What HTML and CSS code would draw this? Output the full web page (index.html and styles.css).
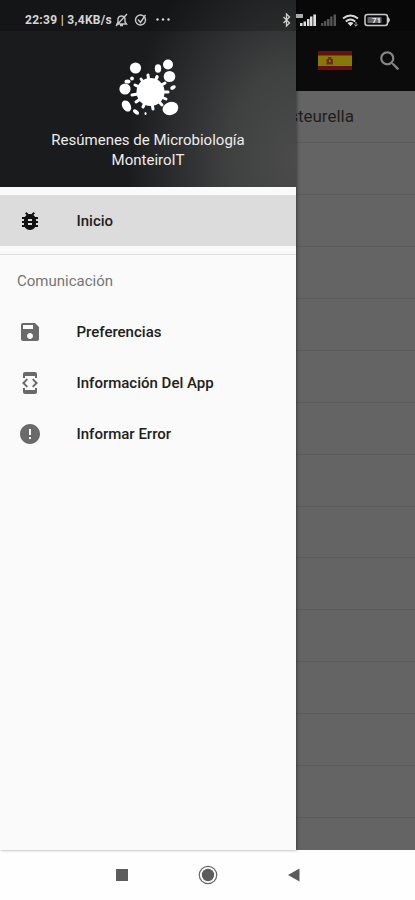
FILE: index.html
```html
<!DOCTYPE html>
<html lang="es">
<head>
<meta charset="utf-8">
<title>Resúmenes de Microbiología</title>
<link rel="stylesheet" href="styles.css">
</head>
<body>
<div class="phone">
  <div class="status">
    <span class="clock">22:39 | 3,4KB/s</span>
    <svg class="status-left" width="60" height="16" viewBox="0 0 60 16" fill="none" stroke="#c8c8c8" stroke-width="1.4">
      <path d="M3 12h9.500l-1.500-2V6.500a3.700 3.700 0 0 0-7 0V10zM6 13.500h3M2 14 13 2"/>
      <circle cx="26.500" cy="8" r="5"/><path d="M24 7.500l2.500 3 5-7.500"/>
      <g fill="#d8d8d8" stroke="none"><circle cx="43.500" cy="7.500" r="1.200"/><circle cx="49" cy="7.500" r="1.200"/><circle cx="54.500" cy="7.500" r="1.200"/></g>
    </svg>
    <svg class="status-right" width="112" height="16" viewBox="0 0 112 16">
      <path d="M2.500 5l6 6L5.500 14V2l3 3-6 6" fill="none" stroke="#d0d0d0" stroke-width="1.300"/>
      <path d="M15 2h7v4h-7z" fill="#aaa"/>
      <path d="M19 14v-3h2.500v3zM22.500 14V9.500H25V14zM26 14V7h2.500v7zM29 14V4.500h2.500V14zM32.300 14V2.500H35V14z" fill="#dedede"/>
      <path d="M40 14v-3h2.300v3zM43 14V9h2.300v5zM46 14V7h2.500v7zM49.200 14V4.500h2.300V14zM52.500 14V2.500H55V14z" fill="#555"/>
      <g fill="none" stroke="#d8d8d8" stroke-width="2"><path d="M62 6.500q7.500-6 15 0M64.800 9.500q4.700-4 9.400 0"/></g>
      <path d="M66.500 11q3-2 6 0l-3 3.300z" fill="#ddd"/><path d="M75 10v4M73.300 12.500l1.700 1.700 1.700-1.700" stroke="#aaa" fill="none"/>
      <rect x="84" y="2.500" width="22.500" height="11" rx="2.500" fill="none" stroke="#ccc" stroke-width="1.500"/>
      <rect x="86.500" y="5" width="14" height="6" fill="#666"/><path d="M107 5q4 3 0 6z" fill="#ccc"/>
      <text x="95.500" y="11.300" class="battery-text">71</text>
    </svg>
  </div>
  <div class="main">
    <nav class="drawer">
      <header class="drawer-head">
        <svg width="64" height="64" viewBox="118 57 64 64" fill="#fff">
          <circle cx="150.500" cy="92" r="14"/>
          <g stroke="#fff" stroke-width="3" stroke-linecap="round"><path d="M150 92L148 75M150 92L157 77M150 92L141 79M150 92L135 85M150 92L132 95M150 92L136 102M150 92L143 107M150 92L153 109M150 92L162 105M150 92L166 99M150 92L168 92M150 92L165 83"/></g>
          <circle cx="135.500" cy="68" r="5.600"/><circle cx="125" cy="89" r="5.600"/><circle cx="168" cy="64.500" r="5"/>
          <ellipse cx="158" cy="68.500" rx="3.200" ry="4.200"/><ellipse cx="169.500" cy="76.500" rx="5.800" ry="5.500"/>
          <ellipse cx="170.500" cy="108.500" rx="8" ry="6.500" transform="rotate(-20 170.500 108.500)"/>
          <ellipse cx="126.500" cy="106" rx="4.200" ry="6" transform="rotate(-30 126.500 106)"/>
          <ellipse cx="136" cy="112" rx="1.900" ry="3.500" transform="rotate(-50 136 112)"/>
          <ellipse cx="145.500" cy="113.500" rx="1" ry="1.500"/><ellipse cx="157" cy="77" rx="1.500" ry="2"/>
          <ellipse cx="173" cy="87.500" rx="3" ry="1.900" transform="rotate(-30 173 87.500)"/>
          <ellipse cx="127.500" cy="81.500" rx="3" ry="2"/><circle cx="132" cy="78.500" r="1.900"/>
        </svg>
        <div class="title">Resúmenes de Microbiología<br>MonteiroIT</div>
      </header>
      <a class="item active">
        <svg class="icon" viewBox="0 0 24 24"><path d="M20 8h-2.810c-.45-.78-1.070-1.450-1.820-1.960L17 4.410 15.590 3l-2.170 2.170C12.960 5.060 12.490 5 12 5s-.96.060-1.410.17L8.410 3 7 4.410l1.620 1.630C7.880 6.550 7.260 7.220 6.810 8H4v2h2.090c-.05.33-.09.66-.09 1v1H4v2h2v1c0 .34.040.67.090 1H4v2h2.810c1.040 1.790 2.970 3 5.190 3s4.150-1.210 5.190-3H20v-2h-2.090c.05-.33.090-.66.090-1v-1h2v-2h-2v-1c0-.34-.04-.67-.09-1H20V8zm-6 8h-4v-2h4v2zm0-4h-4v-2h4v2z"/></svg>
        <span>Inicio</span>
      </a>
      <section class="group">
        <h2>Comunicación</h2>
        <a class="item"><svg class="icon" viewBox="0 0 24 24"><path d="M17 3H5c-1.110 0-2 .9-2 2v14c0 1.100.89 2 2 2h14c1.100 0 2-.9 2-2V7l-4-4zm-5 16c-1.660 0-3-1.340-3-3s1.340-3 3-3 3 1.340 3 3-1.340 3-3 3zm3-10H5V5h10v4z"/></svg><span>Preferencias</span></a>
        <a class="item"><svg class="icon" viewBox="0 0 24 24"><path d="M7 5h10v2h2V3c0-1.100-.9-1.990-2-1.990L7 1c-1.100 0-2 .9-2 2v4h2V5zm8.410 11.590L20 12l-4.590-4.590L14 8.830 17.170 12 14 15.170l1.410 1.420zM10 15.170L6.830 12 10 8.830 8.590 7.410 4 12l4.590 4.590L10 15.170zM17 19H7v-2H5v4c0 1.100.9 2 2 2h10c1.100 0 2-.9 2-2v-4h-2v2z"/></svg><span>Información Del App</span></a>
        <a class="item"><svg class="icon" viewBox="0 0 24 24"><path d="M12 2C6.480 2 2 6.480 2 12s4.480 10 10 10 10-4.480 10-10S17.520 2 12 2zm1 15h-2v-2h2v2zm0-4h-2V7h2v6z"/></svg><span>Informar Error</span></a>
      </section>
    </nav>
    <div class="page">
      <header class="toolbar">
        <svg width="34" height="20" viewBox="0 0 34 20"><path fill="#651013" d="M0 0h34v19H0z"/><path fill="#85790c" d="M0 4.500h34v10.500H0z"/><path fill="#6b3013" d="M8.500 8h1.500V6h3.500v2H15v5.500H8.500z"/><path fill="#8a7433" d="M11 9h1.500v2H11z"/></svg>
        <svg class="search" width="26" height="26" viewBox="0 0 24 24"><path fill="#858585" d="M15.500 14h-.79l-.28-.27C15.410 12.590 16 11.110 16 9.500 16 5.910 13.090 3 9.500 3S3 5.910 3 9.500 5.910 16 9.500 16c1.610 0 3.090-.59 4.230-1.570l.27.28v.79l5 4.990L20.490 19l-4.990-5zm-6 0C7.010 14 5 11.990 5 9.500S7.010 5 9.500 5 14 7.010 14 9.500 11.990 14 9.500 14z"/></svg>
      </header>
      <div class="row"><span>steurella</span></div>
      <div class="row"></div><div class="row"></div><div class="row"></div><div class="row"></div><div class="row"></div><div class="row"></div><div class="row"></div><div class="row"></div><div class="row"></div><div class="row"></div><div class="row"></div><div class="row"></div><div class="row"></div><div class="row"></div>
    </div>
  </div>
  <footer class="navbar">
    <svg width="20" height="20" viewBox="0 0 20 20"><path fill="#5c5c5c" d="M4 4h12v12H4z"/></svg>
    <svg width="20" height="20" viewBox="0 0 20 20"><circle cx="10" cy="10" r="8.700" fill="none" stroke="#666" stroke-width="1.200"/><circle cx="10" cy="10" r="6.200" fill="#5c5c5c"/></svg>
    <svg width="20" height="20" viewBox="0 0 20 20"><path fill="#5c5c5c" d="M15.500 3.500v13L4 10z"/></svg>
  </footer>
</div>
</body>
</html>
```
FILE: styles.css
```css
* { box-sizing: border-box; }
body { margin: 0; font-family: Roboto, sans-serif; }
.phone { position: relative; width: 415px; height: 900px; display: flex; flex-direction: column; background: #fefefe; overflow: hidden; }

.status { position: absolute; z-index: 2; top: 0; left: 0; width: 415px; height: 31px; display: flex; align-items: center; padding: 8px 22px 0 25px; background: rgba(0, 0, 0, 0.2); }
.clock { width: 87px; font-size: 12px; font-weight: 700; line-height: 16px; letter-spacing: 0.3px; color: #d6d6d6; white-space: nowrap; }
.status svg { flex: none; display: block; }
.status-left { margin-left: 2px; }
.status-right { margin-left: auto; }
.battery-text { font-size: 8px; font-weight: 700; fill: #eee; text-anchor: middle; }

.main { height: 850px; display: flex; }
.drawer { position: relative; z-index: 1; width: 296px; flex: none; background: #fafafa; box-shadow: 1px 0 3px #0006; }
.drawer-head { height: 187px; margin-bottom: 8px; padding-top: 57px; display: flex; flex-direction: column; align-items: center; background: radial-gradient(ellipse 170px 230px at 100% 85%, #4b4b4b 0%, #3f4040 40%, #191b1d 100%); }
.drawer-head svg { display: block; margin-left: 4px; }
.title { margin-top: 9px; font-size: 15px; line-height: 20px; letter-spacing: 0; text-align: center; color: #ededed; white-space: nowrap; }

.item { height: 51px; display: flex; align-items: center; padding-left: 18px; font-size: 15px; font-weight: 500; color: #202020; }
.icon { width: 24px; height: 24px; margin-right: 34.500px; fill: #6a6a6a; }
.active { background: #dcdcdc; }
.active .icon { fill: #111; }
.group { margin-top: 8px; border-top: 1px solid #e0e0e0; }
.group h2 { margin: 0; height: 51px; padding-left: 17px; font-size: 15px; font-weight: 400; line-height: 53px; letter-spacing: 0; color: #757575; }

.page { flex: 1; min-width: 0; overflow: hidden; background: #646464; }
.toolbar { height: 91px; padding: 31px 12px 0 22px; display: flex; align-items: center; justify-content: space-between; background: #0b0b0b; }
.row { height: 51.950px; display: flex; align-items: center; justify-content: flex-end; padding-right: 61px; border-bottom: 1px solid #5b5b5b; font-size: 17px; color: #1e1e1e; }

.navbar { height: 50px; display: flex; align-items: center; gap: 66px; padding-left: 112px; }
```
